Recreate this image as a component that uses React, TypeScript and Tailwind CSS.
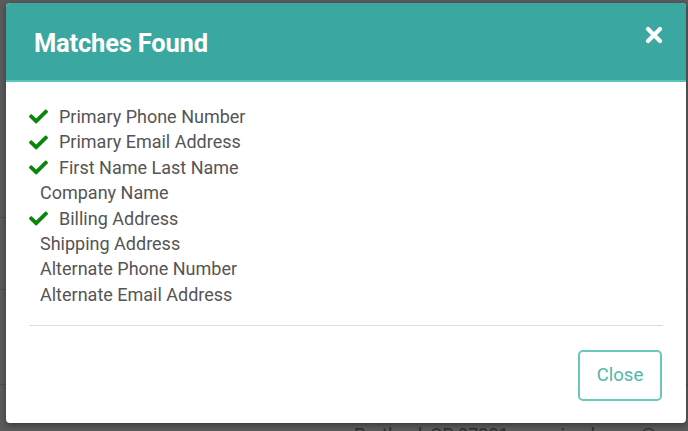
import { FaCheck } from 'react-icons/fa'

type Match = { label: string; found: boolean }

const matches: Match[] = [
  { label: 'Primary Phone Number', found: true },
  { label: 'Primary Email Address', found: true },
  { label: 'First Name Last Name', found: true },
  { label: 'Company Name', found: false },
  { label: 'Billing Address', found: true },
  { label: 'Shipping Address', found: false },
  { label: 'Alternate Phone Number', found: false },
  { label: 'Alternate Email Address', found: false },
]

export default function App() {
  return (
    <div className="relative w-[688px] h-[431px] overflow-hidden bg-[#5b5b5b] font-['Roboto',sans-serif]">
      {/* page behind the overlay */}
      <div className="flex flex-col h-full">
        <div className="shrink-0 h-[218px] border-b border-[#4e4e4e]" />
        <div className="shrink-0 h-[72px] border-b border-[#4e4e4e]" />
        <div className="shrink-0 h-[95px] border-b border-[#4e4e4e]" />
        <div className="shrink-0 flex pt-[36px] text-[18px] leading-[27px] text-[#2e2e2e] whitespace-nowrap">
          <span className="ml-[354px]">Portland, OR 97201</span>
          <span className="ml-[52px]">janderson@sus</span>
        </div>
      </div>

      {/* modal */}
      <div className="absolute left-[6px] top-[3px] w-[680px] h-[420px] bg-white rounded-[4px] shadow-[0_2px_6px_rgba(0,0,0,0.4)] flex flex-col overflow-hidden">
        <div className="h-[79px] bg-[#3aa8a0] border-b-2 border-[#5cc3ba] flex items-start justify-between pl-[28px] pr-[23px]">
          <h2 className="mt-[21px] text-white text-[25.5px] font-bold tracking-[-0.2px]">Matches Found</h2>
          <button className="mt-[23px] text-white">
            <svg width="18" height="18" viewBox="0 0 18 18">
              <path d="M3 3 L15 15 M15 3 L3 15" stroke="white" strokeWidth="4.2" strokeLinecap="round" />
            </svg>
          </button>
        </div>

        <div className="flex-1 flex flex-col px-[23px] pt-[22px] pb-[22px]">
          <ul className="flex flex-col text-[18px] leading-[25.4px] text-[#555]">
            {matches.map((m) => (
              <li key={m.label} className="flex items-center">
                {m.found ? (
                  <>
                    <FaCheck size={19} className="text-[#0a870a] mr-[11px]" />
                    <span>{m.label}</span>
                  </>
                ) : (
                  <span className="pl-[11px]">{m.label}</span>
                )}
              </li>
            ))}
          </ul>

          <div className="mt-[18px] border-t border-[#dcdcdc]" />

          <div className="mt-auto flex justify-end pr-[1px]">
            <button className="w-[84px] h-[51px] border-2 border-[#6cc6bd] rounded-[5px] text-[#4fb8ae] text-[18.5px]">
              Close
            </button>
          </div>
        </div>
      </div>
    </div>
  )
}
